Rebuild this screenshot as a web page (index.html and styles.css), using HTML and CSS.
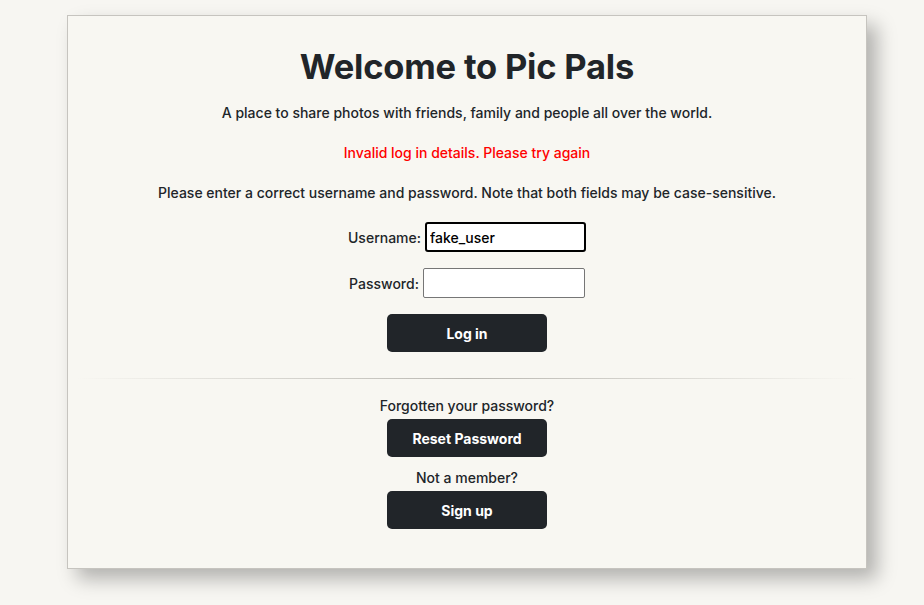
FILE: index.html
```html
<!DOCTYPE html>
<html lang="en">
<head>
<meta charset="utf-8">
<title>Pic Pals - Log in</title>
<link rel="stylesheet" href="styles.css">
</head>
<body>
<main class="card">
  <h1 class="title">Welcome to Pic Pals</h1>
  <p class="lead">A place to share photos with friends, family and people all over the world.</p>
  <p class="error">Invalid log in details. Please try again</p>
  <p class="note">Please enter a correct username and password. Note that both fields may be case-sensitive.</p>
  <form class="login">
    <div class="field field-user">
      <label for="username">Username:</label>
      <input id="username" class="input input-focus" type="text" value="fake_user">
    </div>
    <div class="field field-pass">
      <label for="password">Password:</label>
      <input id="password" class="input" type="password">
    </div>
    <button type="button" class="btn btn-login">Log in</button>
  </form>
  <div class="divider"></div>
  <p class="prompt">Forgotten your password?</p>
  <button type="button" class="btn">Reset Password</button>
  <p class="prompt prompt-member">Not a member?</p>
  <button type="button" class="btn">Sign up</button>
</main>
</body>
</html>
```
FILE: styles.css
```css
* { box-sizing: border-box; }
html, body { margin: 0; padding: 0; }
body {
  background: #f7f6f2;
  font-family: "Inter", "Noto Sans", sans-serif;
  color: #212529;
  width: 924px;
  height: 605px;
  overflow: hidden;
}
.card {
  margin: 15px 0 0 67px;
  width: 800px;
  border: 1px solid #c6c4bf;
  background: #f8f7f2;
  box-shadow: 10px 10px 18px rgba(0, 0, 0, 0.28);
  padding: 27px 0 39px;
  display: flex;
  flex-direction: column;
  align-items: center;
  text-align: center;
}
.title {
  margin: 0;
  font-size: 34.5px;
  line-height: 48px;
  font-weight: 700;
  letter-spacing: -0.2px;
}
.lead, .error, .note, .prompt {
  margin: 0;
  font-size: 14px;
  line-height: 22px;
  font-weight: 500;
}
.lead { margin-top: 11px; }
.error { margin-top: 18px; color: #ff0000; }
.note { margin-top: 18px; }
.login {
  display: flex;
  flex-direction: column;
  align-items: center;
  margin-top: 17px;
}
.field {
  display: flex;
  align-items: center;
  gap: 4px;
  height: 32px;
  font-size: 14px;
  font-weight: 500;
}
.field-pass { margin-top: 14px; }
.input {
  width: 161px;
  height: 30px;
  border: 1px solid #767676;
  border-radius: 2px;
  background: #fff;
  font-family: inherit;
  font-size: 14px;
  font-weight: 500;
  color: #000;
  padding: 0 3px;
}
.field-pass .input { width: 162px; }
.input-focus {
  border: 2px solid #000;
  border-radius: 3px;
  outline: none;
}
.btn {
  width: 160px;
  height: 38px;
  border: 0;
  border-radius: 5px;
  background: #212529;
  color: #fff;
  font-family: inherit;
  font-size: 14px;
  font-weight: 700;
  margin-top: 2px;
}
.btn-login { margin-top: 15px; }
.divider {
  width: 780px;
  height: 1px;
  margin-top: 26px;
  background: linear-gradient(to right, rgba(185,183,177,0), rgba(185,183,177,1) 50%, rgba(185,183,177,0));
}
.prompt { margin-top: 16px; }
.prompt-member { margin-top: 10px; }
```
